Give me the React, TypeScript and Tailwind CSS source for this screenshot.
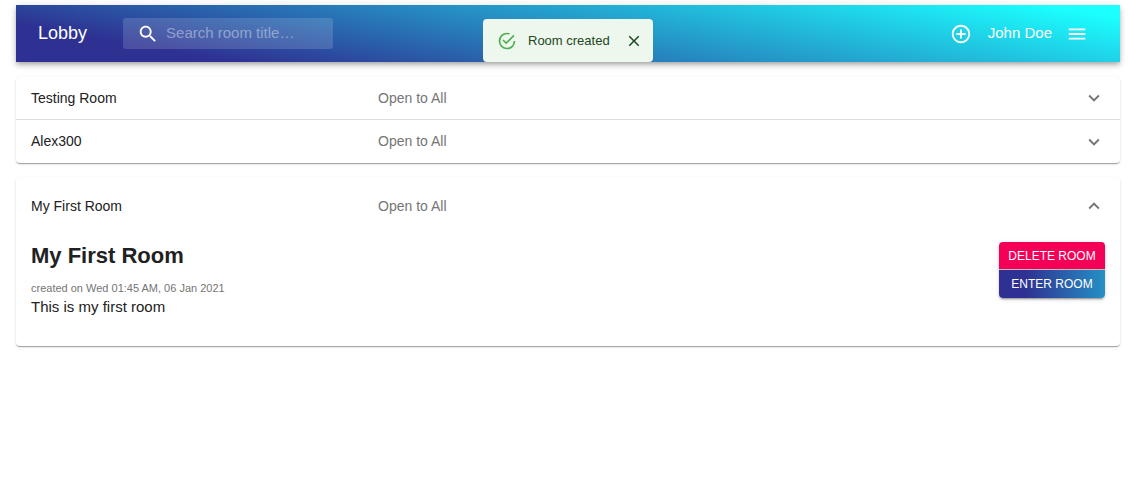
import { ReactNode } from 'react';

function Icon({ className, children }: { className: string; children: ReactNode }) {
  return (
    <svg viewBox="0 0 24 24" fill="currentColor" aria-hidden="true" className={`shrink-0 ${className}`}>
      {children}
    </svg>
  );
}

function TopBar() {
  return (
    <header className="flex h-[57px] items-center bg-[linear-gradient(10deg,#2e3192_15%,#1bffff_95%)] pr-8 pl-[22px] text-white shadow-[0_2px_4px_-1px_rgba(0,0,0,0.2),0_4px_5px_0_rgba(0,0,0,0.14),0_1px_9px_0_rgba(0,0,0,0.12)]">
      <h1 className="text-[18px]">Lobby</h1>
      <label className="ml-9 flex h-[31px] w-[210px] items-center gap-[7px] rounded-[3px] bg-white/15 px-[14px]">
        <Icon className="size-[22px]">
          <path d="M15.5 14h-.79l-.28-.27C15.41 12.59 16 11.11 16 9.5 16 5.91 13.09 3 9.5 3S3 5.91 3 9.5 5.91 16 9.5 16c1.61 0 3.09-.59 4.23-1.57l.27.28v.79l5 4.99L20.49 19l-4.99-5zm-6 0C7.01 14 5 11.99 5 9.5S7.01 5 9.5 5 14 7.01 14 9.5 11.99 14 9.5 14z" />
        </Icon>
        <input
          type="text"
          aria-label="Search rooms"
          placeholder="Search room title…"
          className="w-full min-w-0 bg-transparent text-[15px] outline-none placeholder:text-white/40"
        />
      </label>
      <div className="ml-auto flex items-center">
        <button type="button" aria-label="Create room">
          <Icon className="size-[22px]">
            <path d="M13 7h-2v4H7v2h4v4h2v-4h4v-2h-4V7zm-1-5C6.48 2 2 6.48 2 12s4.48 10 10 10 10-4.48 10-10S17.52 2 12 2zm0 18c-4.41 0-8-3.59-8-8s3.59-8 8-8 8 3.59 8 8-3.59 8-8 8z" />
          </Icon>
        </button>
        <span className="mr-[14px] ml-4 text-[15px]">John Doe</span>
        <button type="button" aria-label="Menu">
          <Icon className="size-[22px]">
            <path d="M3 18h18v-2H3v2zm0-5h18v-2H3v2zm0-7v2h18V6H3z" />
          </Icon>
        </button>
      </div>
    </header>
  );
}

function Toast() {
  return (
    <div
      role="status"
      className="absolute top-[14px] left-1/2 flex h-[43px] w-[170px] -translate-x-1/2 items-center rounded-[4px] bg-[#edf7ed] pr-[10px] pl-[14px] text-[#1e4620]"
    >
      <Icon className="size-5 text-[#4caf50]">
        <path d="M20,12A8,8 0 0,1 12,20A8,8 0 0,1 4,12A8,8 0 0,1 12,4C12.76,4 13.5,4.11 14.2,4.31L15.77,2.74C14.61,2.26 13.34,2 12,2A10,10 0 0,0 2,12A10,10 0 0,0 12,22A10,10 0 0,0 22,12M7.91,10.08L6.5,11.5L11,16L21,6L19.59,4.58L11,13.17L7.91,10.08Z" />
      </Icon>
      <span className="ml-[11px] text-[13px] whitespace-nowrap">Room created</span>
      <button type="button" aria-label="Close" className="ml-auto">
        <Icon className="size-[18px]">
          <path d="M19 6.41L17.59 5 12 10.59 6.41 5 5 6.41 10.59 12 5 17.59 6.41 19 12 13.41 17.59 19 19 17.59 13.41 12z" />
        </Icon>
      </button>
    </div>
  );
}

function RoomSummary({ name, open = false }: { name: string; open?: boolean }) {
  return (
    <button
      type="button"
      aria-expanded={open}
      className={`flex w-full items-center px-[15px] text-left text-[14px] ${open ? 'h-[58px]' : 'h-[43px]'}`}
    >
      <span className="w-[347px] shrink-0">{name}</span>
      <span className="text-[#757575]">Open to All</span>
      <Icon className={`ml-auto size-[22px] text-[#757575] ${open ? 'rotate-180' : ''}`}>
        <path d="M16.59 8.59L12 13.17 7.41 8.59 6 10l6 6 6-6z" />
      </Icon>
    </button>
  );
}

const panel =
  'rounded-[4px] bg-white shadow-[0_2px_1px_-1px_rgba(0,0,0,0.2),0_1px_1px_0_rgba(0,0,0,0.14),0_1px_3px_0_rgba(0,0,0,0.12)]';

export default function App() {
  return (
    <div className="pt-[5px] pr-6 pb-4 pl-4 font-['Liberation_Sans',Arial,sans-serif] text-[#212121]">
      <div className="relative">
        <TopBar />
        <Toast />
      </div>
      <main>
        <section className={`mt-[15px] divide-y divide-[#dedede] ${panel}`}>
          <RoomSummary name="Testing Room" />
          <RoomSummary name="Alex300" />
        </section>
        <section className={`mt-[14px] ${panel}`}>
          <RoomSummary name="My First Room" open />
          <div className="flex items-start justify-between px-[15px] pt-[7px] pb-7">
            <div>
              <h2 className="text-[22px] leading-7 font-bold">My First Room</h2>
              <p className="mt-[10px] text-[11px] leading-4 text-[#757575]">created on Wed 01:45 AM, 06 Jan 2021</p>
              <p className="text-[15px] leading-[22px]">This is my first room</p>
            </div>
            <div className="flex w-[106px] flex-col overflow-hidden rounded-[4px] text-[12px] text-white shadow-[0_3px_1px_-2px_rgba(0,0,0,0.2),0_2px_2px_0_rgba(0,0,0,0.14),0_1px_5px_0_rgba(0,0,0,0.12)]">
              <button type="button" className="h-7 border-b border-[#bdbdbd] bg-[#f50057]">
                DELETE ROOM
              </button>
              <button type="button" className="h-7 bg-[linear-gradient(90deg,#2e3192_25%,#2590c4_100%)]">
                ENTER ROOM
              </button>
            </div>
          </div>
        </section>
      </main>
    </div>
  );
}
